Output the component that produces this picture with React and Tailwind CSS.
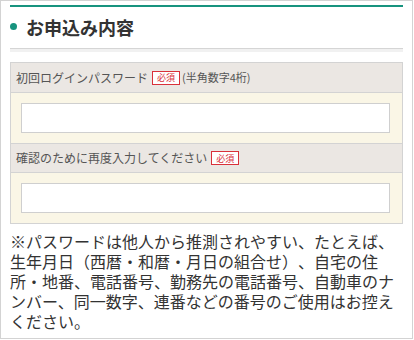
import React from 'react';

const Badge = () => (
  <span className="inline-flex h-[14px] items-center border border-[#d9313a] bg-white px-[4px] text-[9px] leading-none text-[#d9313a]">
    必須
  </span>
);

const FieldRow = ({ label, note, top }) => (
  <>
    <div className={`flex h-[30px] items-center border-b border-[#d3d3d3] bg-[#ebe7e3] pl-[5px] ${top ? '' : 'border-t'}`}>
      <span className="mr-[4px] text-[12px] text-[#555]">{label}</span>
      <Badge />
      {note && <span className="ml-[2px] text-[11px] text-[#555]">{note}</span>}
    </div>
    <div className="bg-[#faf6e6] pb-[10px] pl-[10px] pt-[10px]">
      <input
        type="password"
        className="block h-[30px] w-[369px] border border-[#cfcfcf] bg-white outline-none"
      />
    </div>
  </>
);

export default function App() {
  return (
    <div
      className="h-[339px] w-[413px] border border-[#d3d3d3] bg-white px-[9px] pt-[4px] text-[#333] [text-spacing-trim:space-all]"
      style={{ fontFamily: '"Noto Sans CJK JP", "Liberation Sans", sans-serif' }}
    >
      <div className="h-[2px] bg-[#17937e]" />

      {/* 見出し */}
      <div className="flex h-[41px] items-center pb-[2px]">
        <span className="h-[7px] w-[7px] rounded-full bg-[#17937e]" />
        <h2 className="ml-[9px] text-[18px] font-bold leading-none text-[#333]">お申込み内容</h2>
      </div>
      <div className="h-[4px] border-t border-[#d5d5d5] bg-[#f1f1f1]" />

      {/* 入力欄 */}
      <div className="mt-[10px] border border-[#d3d3d3]">
        <FieldRow label="初回ログインパスワード" note="(半角数字4桁)" top />
        <FieldRow label="確認のために再度入力してください" />
      </div>

      <p className="mt-[7px] text-[16px] leading-[20px] text-[#333]">
        ※パスワードは他人から推測されやすい、たとえば、生年月日（西暦・和暦・月日の組合せ）、自宅の住所・地番、電話番号、勤務先の電話番号、自動車のナンバー、同一数字、連番などの番号のご使用はお控えください。
      </p>
    </div>
  );
}
